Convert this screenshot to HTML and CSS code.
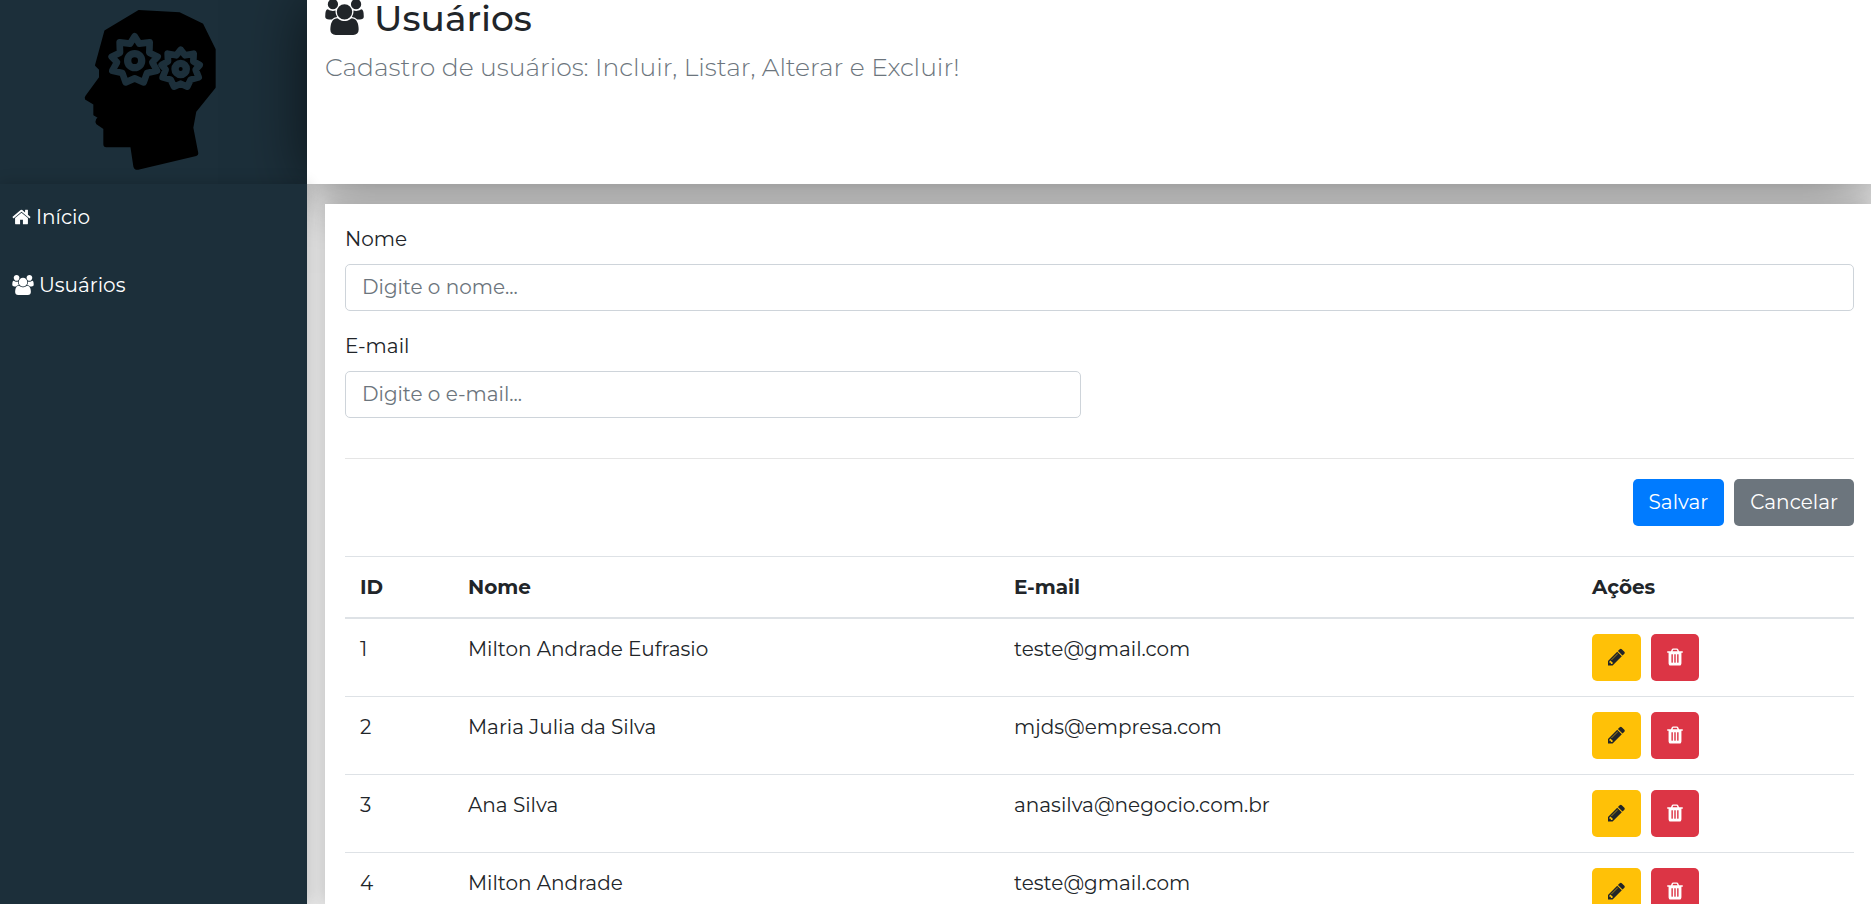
FILE: index.html
```html
<!DOCTYPE html>
<html lang="pt-BR">
<head>
<meta charset="utf-8">
<title>Usuários</title>
<meta name="viewport" content="width=device-width, initial-scale=1">
<link rel="stylesheet" href="styles.css">
</head>
<body>
<svg class="sprite" aria-hidden="true">
  <symbol id="users" viewBox="0 0 1920 1792"><path d="M593 896q-162 5-265 128H194q-82 0-138-40.500T0 865q0-353 124-353 6 0 43.500 21t97.500 42.500T384 597q67 0 133-23-5 37-5 66 0 139 81 256zm1071 637q0 120-73 189.500t-194 69.500H523q-121 0-194-69.500T256 1533q0-53 3.500-103.500t14-109T300 1212t43-97.500 62-81 85.500-53.500T602 960q10 0 43 21.500t73 48 107 48 135 21.500 135-21.500 107-48 73-48 43-21.500q61 0 111.500 20t85.500 53.500 62 81 43 97.500 26.500 108.500 14 109 3.500 103.500zM640 256q0 106-75 181t-181 75-181-75-75-181 75-181T384 0t181 75 75 181zm704 384q0 159-112.500 271.500T960 1024 688.500 911.500 576 640t112.500-271.500T960 256t271.500 112.500T1344 640zm576 225q0 78-56 118.500t-138 40.500h-134q-103-123-265-128 81-117 81-256 0-29-5-66 66 23 133 23 59 0 119-21.500t97.500-42.500 43.500-21q124 0 124 353zm-128-609q0 106-75 181t-181 75-181-75-75-181 75-181 181-75 181 75 75 181z"/></symbol>
  <symbol id="home" viewBox="0 0 1664 1792"><path d="M1408 992v480q0 26-19 45t-45 19H960v-384H704v384H320q-26 0-45-19t-19-45V992q0-1 .5-3t.5-3l575-474 575 474q1 2 1 6zm223-69-62 74q-8 9-21 11h-3q-13 0-21-7L832 424 140 1001q-12 8-24 7-13-2-21-11l-62-74q-8-10-7-23.500T37 878l719-599q32-26 76-26t76 26l244 204V288q0-14 9-23t23-9h192q14 0 23 9t9 23v408l219 182q10 8 11 21.500t-7 23.500z"/></symbol>
  <symbol id="pencil" viewBox="0 0 1536 1792"><path d="m363 1536 91-91-235-235-91 91v107h128v128h107zm523-928q0-22-22-22-10 0-17 7l-542 542q-7 7-7 17 0 22 22 22 10 0 17-7l542-542q7-7 7-17zm-54-192 416 416-832 832H0v-416zm683 96q0 53-37 90l-166 166-416-416 166-165q36-38 90-38 53 0 91 38l235 234q37 39 37 91z"/></symbol>
  <symbol id="trash" viewBox="0 0 1408 1792"><path d="M512 1376V672q0-14-9-23t-23-9h-64q-14 0-23 9t-9 23v704q0 14 9 23t23 9h64q14 0 23-9t9-23zm256 0V672q0-14-9-23t-23-9h-64q-14 0-23 9t-9 23v704q0 14 9 23t23 9h64q14 0 23-9t9-23zm256 0V672q0-14-9-23t-23-9h-64q-14 0-23 9t-9 23v704q0 14 9 23t23 9h64q14 0 23-9t9-23zM480 384h448l-48-117q-7-9-17-11H546q-10 2-17 11zm928 32v64q0 14-9 23t-23 9h-96v948q0 83-47 143.500t-113 60.500H288q-66 0-113-58.500T128 1464V512H32q-14 0-23-9t-9-23v-64q0-14 9-23t23-9h309l70-167q15-37 54-63t79-26h320q40 0 79 26t54 63l70 167h309q14 0 23 9t9 23z"/></symbol>
</svg>
<div class="app">
  <aside class="logo">
    <a href="#" aria-label="Início">
      <svg class="logo-art" viewBox="11 0 540 540" aria-hidden="true">
        <path class="head" d="M235 33 358 40 426 73 463 148V262L405 334 396 383 411 460Q411 464 407 465L233 506Q224 508 222 499L213 439H138Q132 439 132 433V385L110 370Q107 365 110 359L116 352 102 344V312L77 297Q75 293 78 289L119 233V208L107 196 135 93Z"/>
        <path class="gear" d="M223 109 237 131 268 127 267 158 292 170 276 187 290 212 260 219 250 247 223 235 196 247 186 219 156 212 170 187 154 170 179 158 178 127 209 131Z"/>
        <circle class="ring" cx="223" cy="182" r="21"/>
        <path class="gear" d="M361 149 374 166 400 161 399 184 418 195 406 209 415 232 391 239 381 260 361 251 341 260 331 239 307 232 316 209 304 195 323 184 322 161 348 166Z"/>
        <circle class="ring" cx="361" cy="207" r="17"/>
      </svg>
    </a>
  </aside>
  <header class="header">
    <h1><svg class="icon icon-title" aria-hidden="true"><use href="#users"/></svg> Usuários</h1>
    <p>Cadastro de usuários: Incluir, Listar, Alterar e Excluir!</p>
  </header>
  <aside class="menu">
    <nav>
      <a href="#"><svg class="icon icon-home" aria-hidden="true"><use href="#home"/></svg>Início</a>
      <a href="#"><svg class="icon icon-users" aria-hidden="true"><use href="#users"/></svg>Usuários</a>
    </nav>
  </aside>
  <main class="content">
    <div class="card">
      <form>
        <div class="field">
          <label for="name">Nome</label>
          <input id="name" type="text" placeholder="Digite o nome...">
        </div>
        <div class="field field-half">
          <label for="email">E-mail</label>
          <input id="email" type="text" placeholder="Digite o e-mail...">
        </div>
        <hr>
        <div class="actions">
          <button class="btn btn-primary" type="button">Salvar</button>
          <button class="btn btn-secondary" type="button">Cancelar</button>
        </div>
      </form>
      <table>
        <colgroup><col class="col-id"><col class="col-name"><col class="col-email"><col></colgroup>
        <thead>
          <tr><th>ID</th><th>Nome</th><th>E-mail</th><th>Ações</th></tr>
        </thead>
        <tbody>
          <tr><td>1</td><td>Milton Andrade Eufrasio</td><td>teste@gmail.com</td><td><div class="row-actions"><button class="btn btn-warning" type="button" aria-label="Alterar"><svg class="icon icon-pencil"><use href="#pencil"/></svg></button><button class="btn btn-danger" type="button" aria-label="Excluir"><svg class="icon icon-trash"><use href="#trash"/></svg></button></div></td></tr>
          <tr><td>2</td><td>Maria Julia da Silva</td><td>mjds@empresa.com</td><td><div class="row-actions"><button class="btn btn-warning" type="button" aria-label="Alterar"><svg class="icon icon-pencil"><use href="#pencil"/></svg></button><button class="btn btn-danger" type="button" aria-label="Excluir"><svg class="icon icon-trash"><use href="#trash"/></svg></button></div></td></tr>
          <tr><td>3</td><td>Ana Silva</td><td>anasilva@negocio.com.br</td><td><div class="row-actions"><button class="btn btn-warning" type="button" aria-label="Alterar"><svg class="icon icon-pencil"><use href="#pencil"/></svg></button><button class="btn btn-danger" type="button" aria-label="Excluir"><svg class="icon icon-trash"><use href="#trash"/></svg></button></div></td></tr>
          <tr><td>4</td><td>Milton Andrade</td><td>teste@gmail.com</td><td><div class="row-actions"><button class="btn btn-warning" type="button" aria-label="Alterar"><svg class="icon icon-pencil"><use href="#pencil"/></svg></button><button class="btn btn-danger" type="button" aria-label="Excluir"><svg class="icon icon-trash"><use href="#trash"/></svg></button></div></td></tr>
        </tbody>
      </table>
    </div>
  </main>
</div>
</body>
</html>
```

FILE: styles.css
```css
* {
  box-sizing: border-box;
}

body {
  margin: 0;
  font-family: Montserrat, Inter, "Open Sans", sans-serif;
  font-size: 20px;
  font-weight: 400;
  line-height: 30px;
  color: #212529;
}

.sprite {
  position: absolute;
  width: 0;
  height: 0;
}

.icon {
  flex: none;
  fill: currentColor;
}

.app {
  display: grid;
  grid-template-columns: 307px minmax(0, 1fr);
  grid-template-rows: 184px minmax(0, 1fr);
  height: 100vh;
  overflow: hidden;
  background: #e8e8e8;
}

.logo {
  display: flex;
  justify-content: center;
  background: #1c2f3a;
}

.logo-art {
  display: block;
  width: 180px;
  height: 180px;
}

.head {
  fill: #000;
  stroke: #000;
  stroke-width: 6;
  stroke-linejoin: round;
}

.gear,
.ring {
  fill: none;
  stroke: #1c2f3a;
  stroke-width: 20;
  stroke-linejoin: round;
}

.ring {
  stroke-width: 22;
}

.header {
  padding: 0 18px;
  background: #fff;
  box-shadow: 0 0 60px rgba(0, 0, 0, 0.6);
}

.header h1 {
  display: flex;
  align-items: center;
  gap: 10px;
  margin: 0;
  font-size: 36px;
  font-weight: 500;
  line-height: 34px;
}

.header p {
  margin: 13px 0 0;
  font-size: 25px;
  font-weight: 300;
  line-height: 38px;
  color: #6c757d;
}

.icon-title {
  width: 39px;
  height: 36px;
  margin-top: -1px;
}

.menu {
  background: #1c2f3a;
  box-shadow: 0 0 15px rgba(0, 0, 0, 0.2);
}

.menu a {
  display: flex;
  align-items: center;
  gap: 5px;
  padding: 18px 12px 20px;
  color: #fff;
  text-decoration: none;
}

.icon-home {
  width: 19px;
  height: 20px;
}

.icon-users {
  width: 22px;
  height: 20px;
}

.content {
  padding: 20px 0 0 18px;
}

.card {
  height: 100%;
  padding: 20px 17px 0 20px;
  background: #fff;
  box-shadow: 0 0 20px rgba(0, 0, 0, 0.2);
}

.field {
  display: flex;
  flex-direction: column;
  gap: 10px;
  margin-bottom: 20px;
}

.field-half {
  width: 736px;
}

input {
  width: 100%;
  height: 47px;
  padding: 0 16px 2px;
  border: 1px solid #ced4da;
  border-radius: 5px;
  background: #fff;
  font: inherit;
  color: #495057;
}

input::placeholder {
  color: #6c757d;
  opacity: 1;
}

hr {
  margin: 40px 0 20px;
  border: 0;
  border-top: 1px solid #e5e5e5;
}

.actions,
.row-actions {
  display: flex;
  gap: 10px;
}

.actions {
  justify-content: flex-end;
}

.btn {
  display: flex;
  align-items: center;
  justify-content: center;
  height: 47px;
  padding: 0 16px 2px;
  border: 0;
  border-radius: 5px;
  font: inherit;
  color: #fff;
}

.btn-primary {
  background: #007bff;
}

.btn-secondary {
  background: #6c757d;
}

.btn-warning {
  background: #ffc107;
  color: #212529;
}

.btn-danger {
  background: #dc3545;
}

.icon-pencil {
  width: 17px;
  height: 20px;
}

.icon-trash {
  width: 16px;
  height: 20px;
}

table {
  width: 100%;
  margin-top: 30px;
  table-layout: fixed;
  border-collapse: collapse;
}

.col-id {
  width: 108px;
}

.col-name {
  width: 546px;
}

.col-email {
  width: 578px;
}

th,
td {
  padding: 15px;
  border-top: 1px solid #dee2e6;
  text-align: left;
  vertical-align: top;
}

th {
  border-bottom: 2px solid #dee2e6;
  font-weight: 700;
}
```
